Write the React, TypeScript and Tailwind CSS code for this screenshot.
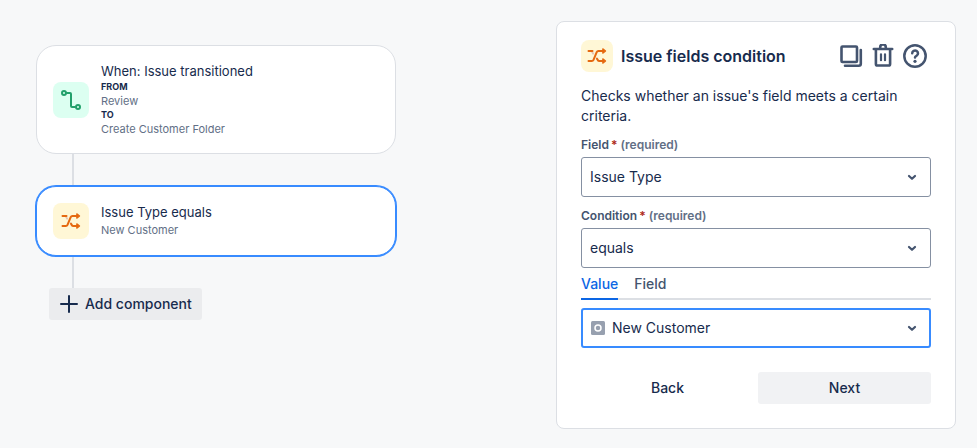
import type { ReactNode } from 'react';

const ShuffleIcon = () => (
  <svg width="24" height="24" viewBox="0 0 24 24" fill="none" aria-hidden="true">
    <path d="M6.500 7 8.600 10.400M11.300 13.600l2.200 3.400" stroke="#E3C4B4" strokeWidth="1.800" />
    <path
      d="M3.500 7h4M3.500 17h3.300q1.200 0 1.700-1.200l3.200-7.600Q12.200 7 13.400 7H18M12 14.800 13 16.400q.4.6 1.200.6H18"
      stroke="#E56910"
      strokeWidth="2"
      strokeLinecap="round"
      strokeLinejoin="round"
    />
    <path
      d="M17.800 4.800 20.600 7l-2.800 2.200zM17.800 14.800 20.600 17l-2.800 2.200z"
      fill="#E56910"
      stroke="#E56910"
      strokeWidth="1.200"
      strokeLinejoin="round"
    />
  </svg>
);

const TransitionIcon = () => (
  <svg width="24" height="24" viewBox="0 0 24 24" fill="none" stroke="#22A06B" strokeWidth="2" aria-hidden="true">
    <circle cx="5" cy="5" r="2" />
    <circle cx="19" cy="19" r="2" />
    <path d="M7.200 5H11q1 0 1 1v12q0 1 1 1h3.800" />
  </svg>
);

const CopyIcon = () => (
  <svg width="24" height="24" viewBox="0 0 24 24" fill="none" stroke="currentColor" strokeWidth="2.600" strokeLinecap="round" aria-hidden="true">
    <rect x="2.500" y="2.500" width="15.500" height="15.500" rx="1" />
    <path d="M6 21.800h13.800q2 0 2-2V6" />
  </svg>
);

const TrashIcon = () => (
  <svg width="24" height="24" viewBox="0 0 24 24" fill="none" stroke="currentColor" strokeWidth="2.600" strokeLinecap="round" aria-hidden="true">
    <path d="M2.800 5h18.400M4.900 6v13.900q0 1.600 1.600 1.600h11q1.600 0 1.600-1.600V6" />
    <path d="M9.200 4.500V3.300a2.800 2.800 0 0 1 5.600 0v1.200" />
    <path d="M10 10.300v5.900M14 10.300v5.900" strokeWidth="2.200" />
  </svg>
);

const HelpIcon = () => (
  <svg width="24" height="24" viewBox="0 0 24 24" fill="none" stroke="currentColor" strokeWidth="2.500" strokeLinecap="round" aria-hidden="true">
    <circle cx="12" cy="12" r="10.700" />
    <path d="M9.200 9.300a2.900 2.900 0 1 1 4.400 2.500c-1 .6-1.600 1-1.600 1.700" />
    <circle cx="12" cy="17.300" r="1.600" fill="currentColor" stroke="none" />
  </svg>
);

const Chevron = () => (
  <svg
    className="pointer-events-none absolute inset-y-0 right-3 my-auto"
    width="14"
    height="14"
    viewBox="0 0 14 14"
    fill="none"
    aria-hidden="true"
  >
    <path d="m4 6 3 2.800L10 6" stroke="#44546F" strokeWidth="2.200" strokeLinecap="round" strokeLinejoin="round" />
  </svg>
);

const Connector = () => <div className="ml-9 h-8 w-0.5 bg-[#DCDFE4]" />;

const headerActions = [
  { label: 'Duplicate', icon: <CopyIcon /> },
  { label: 'Delete', icon: <TrashIcon /> },
  { label: 'Help', icon: <HelpIcon /> },
];

const SelectField = ({ id, label, value }: { id: string; label: string; value: string }) => (
  <div>
    <label htmlFor={id} className="mb-1 block text-xs leading-4 font-semibold text-[#44546F]">
      {label}
      <span className="pl-0.5 text-[#AE2A19]">*</span>
      <span className="text-[#626F86]"> (required)</span>
    </label>
    <div className="relative">
      <select
        id={id}
        defaultValue={value}
        className="h-10 w-full appearance-none rounded-[3px] border border-[#8590A2] bg-white pr-8 pl-2 text-sm"
      >
        <option>{value}</option>
      </select>
      <Chevron />
    </div>
  </div>
);

const RuleCard = ({ icon, title, children }: { icon: ReactNode; title: string; children: ReactNode }) => (
  <>
    {icon}
    <div className="pb-0.5">
      <h2 className="text-[13px] leading-5">{title}</h2>
      {children}
    </div>
  </>
);

const App = () => {
  return (
    <main className="flex min-h-screen items-start justify-between gap-8 bg-[#F7F8F9] pt-[21px] pr-[21px] pb-5 pl-9 font-['Inter',sans-serif] text-[#172B4D]">
      <section className="max-w-[360px] grow pt-6" aria-label="Rule">
        <div className="flex min-h-[109px] items-center gap-3 rounded-[20px] border border-[#DCDFE4] bg-white px-4">
          <RuleCard
            icon={
              <div className="flex size-9 shrink-0 items-center justify-center rounded-lg bg-[#DCFFF1]">
                <TransitionIcon />
              </div>
            }
            title="When: Issue transitioned"
          >
            <dl className="text-[11px] leading-4 text-[#626F86]">
              <dt className="text-[9px] leading-3 font-bold text-[#172B4D]">FROM</dt>
              <dd>Review</dd>
              <dt className="text-[9px] leading-3 font-bold text-[#172B4D]">TO</dt>
              <dd>Create Customer Folder</dd>
            </dl>
          </RuleCard>
        </div>

        <Connector />

        <div className="relative flex min-h-[70px] items-center gap-3 rounded-[20px] border border-[#388BFF] bg-white px-4 ring-1 ring-[#388BFF]">
          <RuleCard
            icon={
              <div className="flex size-9 shrink-0 items-center justify-center rounded-lg bg-[#FFF7D6]">
                <ShuffleIcon />
              </div>
            }
            title="Issue Type equals"
          >
            <p className="text-[11px] leading-4 text-[#626F86]">New Customer</p>
          </RuleCard>
        </div>

        <Connector />

        <button
          type="button"
          className="ml-[13px] flex h-8 items-center gap-1.5 rounded-[3px] bg-[#EBECEE] px-2.5 text-sm font-medium"
        >
          <svg width="20" height="20" viewBox="0 0 20 20" stroke="currentColor" strokeWidth="2" strokeLinecap="round" aria-hidden="true">
            <path d="M10 2v16M2 10h16" />
          </svg>
          Add component
        </button>
      </section>

      <section className="w-[400px] shrink-0 rounded-lg border border-[#DCDFE4] bg-white px-6 pt-[18px] pb-6">
        <header className="flex items-center gap-2">
          <div className="flex size-8 items-center justify-center rounded-lg bg-[#FFF7D6]">
            <ShuffleIcon />
          </div>
          <h1 className="text-base font-semibold">Issue fields condition</h1>
          <div className="ml-auto flex gap-2 pr-1 text-[#44546F]">
            {headerActions.map((action) => (
              <button key={action.label} type="button" aria-label={action.label}>
                {action.icon}
              </button>
            ))}
          </div>
        </header>

        <p className="mt-3.5 text-sm leading-5">Checks whether an issue's field meets a certain criteria.</p>

        <form className="mt-[11px]">
          <div className="flex flex-col gap-[11px]">
            <SelectField id="field" label="Field" value="Issue Type" />
            <SelectField id="condition" label="Condition" value="equals" />
          </div>

          <div className="flex h-8 gap-4 border-b-2 border-[#DCDFE4] text-sm font-medium" role="tablist">
            <button
              type="button"
              role="tab"
              aria-selected="true"
              className="-mb-0.5 border-b-2 border-[#0C66E4] pt-0.5 text-[#0C66E4]"
            >
              Value
            </button>
            <button type="button" role="tab" aria-selected="false" className="pt-0.5 text-[#44546F]">
              Field
            </button>
          </div>

          <div className="relative mt-2">
            <svg
              className="pointer-events-none absolute inset-y-0 left-2.5 my-auto"
              width="14"
              height="14"
              viewBox="0 0 14 14"
              aria-hidden="true"
            >
              <rect width="14" height="14" rx="1.500" fill="#97A0AF" />
              <circle cx="7" cy="7" r="3" fill="none" stroke="#fff" strokeWidth="1.500" />
            </svg>
            <select
              aria-label="Value"
              defaultValue="New Customer"
              className="h-10 w-full appearance-none rounded-[3px] border-2 border-[#388BFF] bg-white pr-8 pl-[29px] text-sm"
            >
              <option>New Customer</option>
            </select>
            <Chevron />
          </div>

          <div className="mt-6 grid grid-cols-2 gap-1 text-sm font-medium">
            <button type="button" className="h-8 rounded-[3px]">
              Back
            </button>
            <button type="button" className="h-8 rounded-[3px] bg-[#F1F2F4]">
              Next
            </button>
          </div>
        </form>
      </section>
    </main>
  );
};

export default App;
